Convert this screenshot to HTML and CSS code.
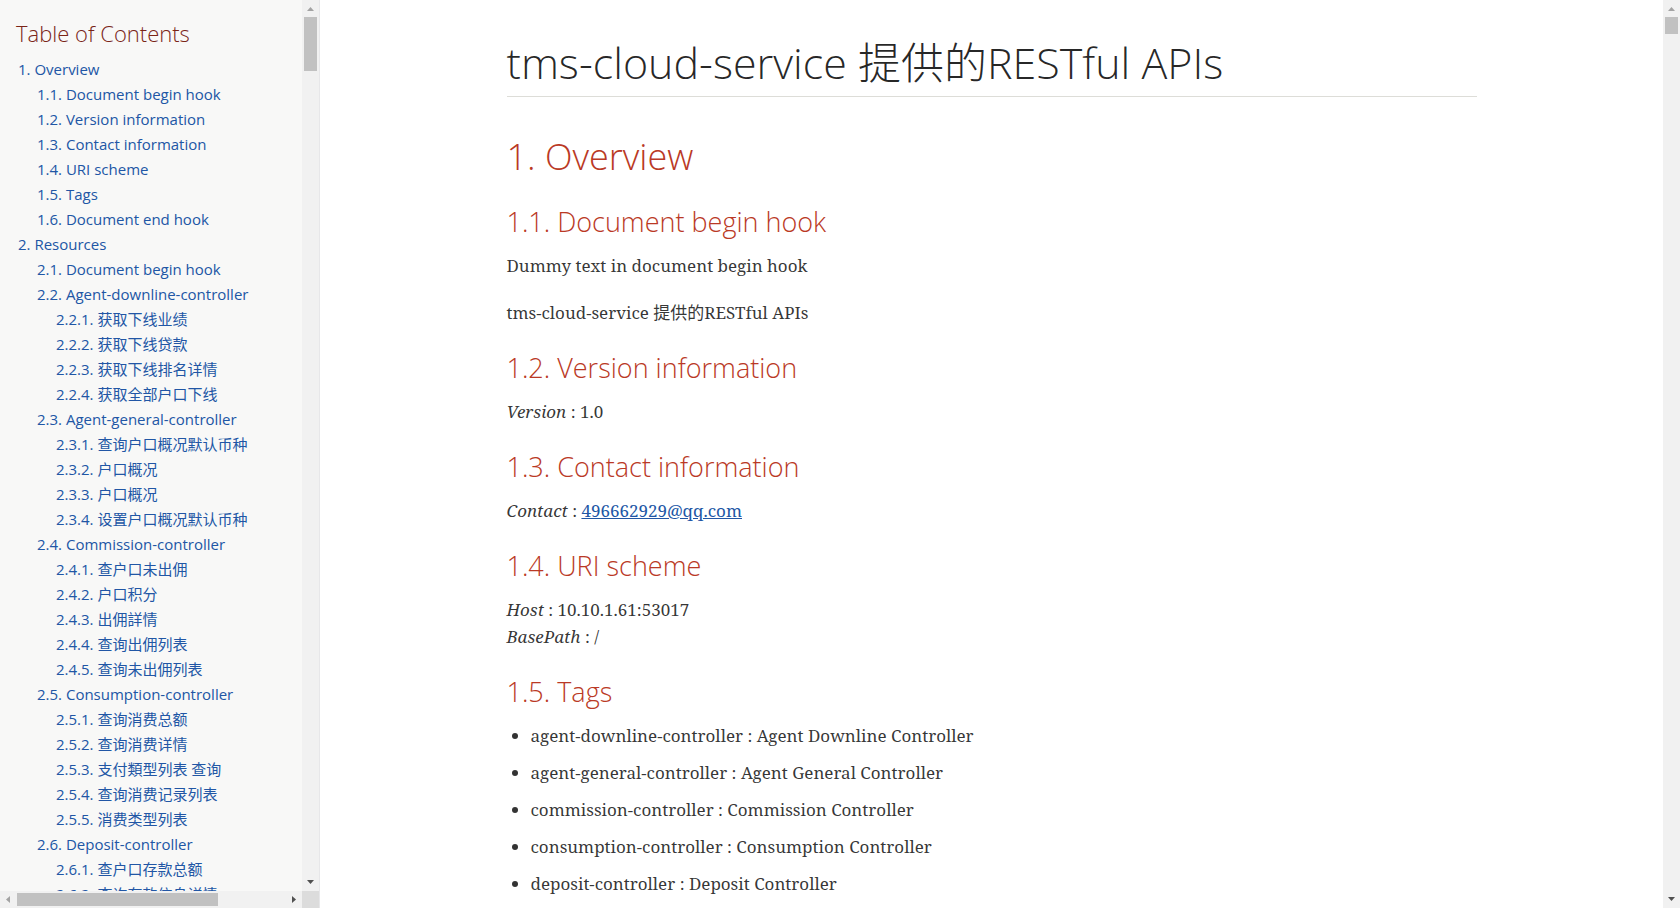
FILE: index.html
```
<!DOCTYPE html>
<html lang="zh-CN">
<head>
<meta charset="utf-8">
<title>tms-cloud-service 提供的RESTful APIs</title>
<link rel="stylesheet" href="styles.css">
</head>
<body class="page">
<aside class="sidebar">
  <nav class="toc" aria-labelledby="toc-title">
    <h2 class="toc-title" id="toc-title">Table of Contents</h2>
    <ul class="toc-list">
      <li><a href="#overview">1. Overview</a>
        <ul>
          <li><a href="#begin">1.1. Document begin hook</a></li>
          <li><a href="#version">1.2. Version information</a></li>
          <li><a href="#contact">1.3. Contact information</a></li>
          <li><a href="#uri">1.4. URI scheme</a></li>
          <li><a href="#tags">1.5. Tags</a></li>
          <li><a href="#end">1.6. Document end hook</a></li>
        </ul>
      </li>
      <li><a href="#resources">2. Resources</a>
        <ul>
          <li><a href="#r1">2.1. Document begin hook</a></li>
          <li><a href="#r2">2.2. Agent-downline-controller</a>
            <ul>
              <li><a href="#r21">2.2.1. 获取下线业绩</a></li>
              <li><a href="#r22">2.2.2. 获取下线贷款</a></li>
              <li><a href="#r23">2.2.3. 获取下线排名详情</a></li>
              <li><a href="#r24">2.2.4. 获取全部户口下线</a></li>
            </ul>
          </li>
          <li><a href="#r3">2.3. Agent-general-controller</a>
            <ul>
              <li><a href="#r31">2.3.1. 查询户口概况默认币种</a></li>
              <li><a href="#r32">2.3.2. 户口概况</a></li>
              <li><a href="#r33">2.3.3. 户口概况</a></li>
              <li><a href="#r34">2.3.4. 设置户口概况默认币种</a></li>
            </ul>
          </li>
          <li><a href="#r4">2.4. Commission-controller</a>
            <ul>
              <li><a href="#r41">2.4.1. 查户口未出佣</a></li>
              <li><a href="#r42">2.4.2. 户口积分</a></li>
              <li><a href="#r43">2.4.3. 出佣詳情</a></li>
              <li><a href="#r44">2.4.4. 查询出佣列表</a></li>
              <li><a href="#r45">2.4.5. 查询未出佣列表</a></li>
            </ul>
          </li>
          <li><a href="#r5">2.5. Consumption-controller</a>
            <ul>
              <li><a href="#r51">2.5.1. 查询消费总额</a></li>
              <li><a href="#r52">2.5.2. 查询消费详情</a></li>
              <li><a href="#r53">2.5.3. 支付類型列表 查询</a></li>
              <li><a href="#r54">2.5.4. 查询消费记录列表</a></li>
              <li><a href="#r55">2.5.5. 消费类型列表</a></li>
            </ul>
          </li>
          <li><a href="#r6">2.6. Deposit-controller</a>
            <ul>
              <li><a href="#r61">2.6.1. 查户口存款总额</a></li>
              <li><a href="#r62">2.6.2. 查询存款信息详情</a></li>
            </ul>
          </li>
        </ul>
      </li>
    </ul>
  </nav>
  <div class="bar bar-v">
    <button class="arrow" aria-label="Scroll up" disabled><svg width="17" height="17"><path d="M5 11L8.500 7L12 11Z"/></svg></button>
    <div class="track"><div class="thumb thumb-toc"></div></div>
    <button class="arrow" aria-label="Scroll down"><svg width="17" height="17"><path d="M5 6L12 6L8.500 10Z"/></svg></button>
  </div>
  <div class="bar bar-h">
    <button class="arrow" aria-label="Scroll left" disabled><svg width="17" height="17"><path d="M10 5L6 8.500L10 12Z"/></svg></button>
    <div class="track"><div class="thumb thumb-wide"></div></div>
    <button class="arrow" aria-label="Scroll right"><svg width="17" height="17"><path d="M7 5L11 8.500L7 12Z"/></svg></button>
  </div>
  <div class="corner"></div>
</aside>
<main class="main">
  <article class="content">
    <h1 class="doc-title">tms-cloud-service 提供的RESTful APIs</h1>
    <section id="overview">
      <h2 class="chapter">1. Overview</h2>
      <h3 class="section-title" id="begin">1.1. Document begin hook</h3>
      <p>Dummy text in document begin hook</p>
      <p>tms-cloud-service 提供的RESTful APIs</p>
      <h3 class="section-title" id="version">1.2. Version information</h3>
      <p><em>Version</em> : 1.0</p>
      <h3 class="section-title" id="contact">1.3. Contact information</h3>
      <p><em>Contact</em> : <a class="mail" href="mailto:496662929@qq.com">496662929@qq.com</a></p>
      <h3 class="section-title" id="uri">1.4. URI scheme</h3>
      <p><em>Host</em> : 10.10.1.61:53017<br><em>BasePath</em> : /</p>
      <h3 class="section-title" id="tags">1.5. Tags</h3>
      <ul class="tags">
        <li>agent-downline-controller : Agent Downline Controller</li>
        <li>agent-general-controller : Agent General Controller</li>
        <li>commission-controller : Commission Controller</li>
        <li>consumption-controller : Consumption Controller</li>
        <li>deposit-controller : Deposit Controller</li>
      </ul>
    </section>
  </article>
</main>
<div class="bar bar-v">
  <button class="arrow" aria-label="Scroll page up" disabled><svg width="17" height="17"><path d="M5 11L8.500 7L12 11Z"/></svg></button>
  <div class="track"><div class="thumb thumb-page"></div></div>
  <button class="arrow" aria-label="Scroll page down"><svg width="17" height="17"><path d="M5 6L12 6L8.500 10Z"/></svg></button>
</div>
</body>
</html>
```
FILE: styles.css
```
* { box-sizing: border-box; }

.page {
  display: grid;
  grid-template-columns: 320px 1fr 17px;
  grid-template-rows: 100%;
  height: 100vh;
  margin: 0;
  overflow: hidden;
  background: #fff;
  color: rgba(0, 0, 0, 0.8);
  font-family: "Noto Serif", "DejaVu Serif Condensed", "DejaVu Serif", "Noto Sans CJK SC", serif;
  font-size: 17px;
}

.sidebar {
  display: grid;
  grid-template-columns: 1fr 17px;
  grid-template-rows: minmax(0, 1fr) 17px;
  min-height: 0;
  background: #f8f8f7;
  border-right: 1px solid #e7e7e9;
}

.toc {
  overflow: hidden;
  padding: 19px 0 0 16px;
  white-space: nowrap;
  font-family: "Open Sans", "Noto Sans CJK SC", sans-serif;
}

.toc-title {
  margin: 0 0 10px;
  color: #7a2518;
  font-size: 22px;
  font-weight: 300;
  line-height: 28px;
}

.toc ul {
  margin: 0;
  padding: 0 0 0 19px;
  list-style: none;
}

.toc .toc-list { padding-left: 2px; }

.toc li {
  font-size: 15px;
  line-height: 25px;
}

.toc a {
  display: block;
  height: 25px;
  color: #2156a5;
  text-decoration: none;
}

.bar {
  display: flex;
  background: #f1f1f1;
}

.bar-v { flex-direction: column; }

.arrow {
  width: 17px;
  height: 17px;
  padding: 0;
  border: 0;
  background: none;
  color: #505050;
}

.arrow:disabled { color: #a3a3a3; }

.arrow svg {
  display: block;
  fill: currentColor;
}

.track {
  flex: 1;
  padding: 0 2px;
}

.bar-h .track { padding: 2px 0; }

.thumb { background: #c1c1c1; }
.thumb-toc { height: 54px; }
.thumb-page { height: 17px; }
.thumb-wide { width: 75%; height: 100%; }

.corner { background: #dcdcdc; }

.main {
  min-width: 0;
  overflow: hidden;
  padding: 0 15px;
}

.content {
  max-width: 1000px;
  margin: 0 auto;
  padding: 37px 15px 0;
}

.doc-title,
.chapter,
.section-title {
  font-family: "Open Sans", "Noto Sans CJK SC", sans-serif;
  font-weight: 300;
}

.doc-title {
  margin: 0 0 38px;
  padding-bottom: 7px;
  border-bottom: 1px solid #ddddd8;
  color: rgba(0, 0, 0, 0.85);
  font-size: 43px;
  line-height: 52px;
}

.chapter {
  margin: 0 0 27px;
  color: #ba3925;
  font-size: 36px;
  line-height: 44px;
}

.section-title {
  margin: 26px 0 14px;
  color: #ba3925;
  font-size: 27px;
  line-height: 32px;
}

.content p {
  margin: 0 0 20px;
  line-height: 27px;
}

.mail { color: #2156a5; }

.tags {
  margin: 0;
  padding-left: 24px;
}

.tags li {
  margin-bottom: 10px;
  line-height: 27px;
}
```
